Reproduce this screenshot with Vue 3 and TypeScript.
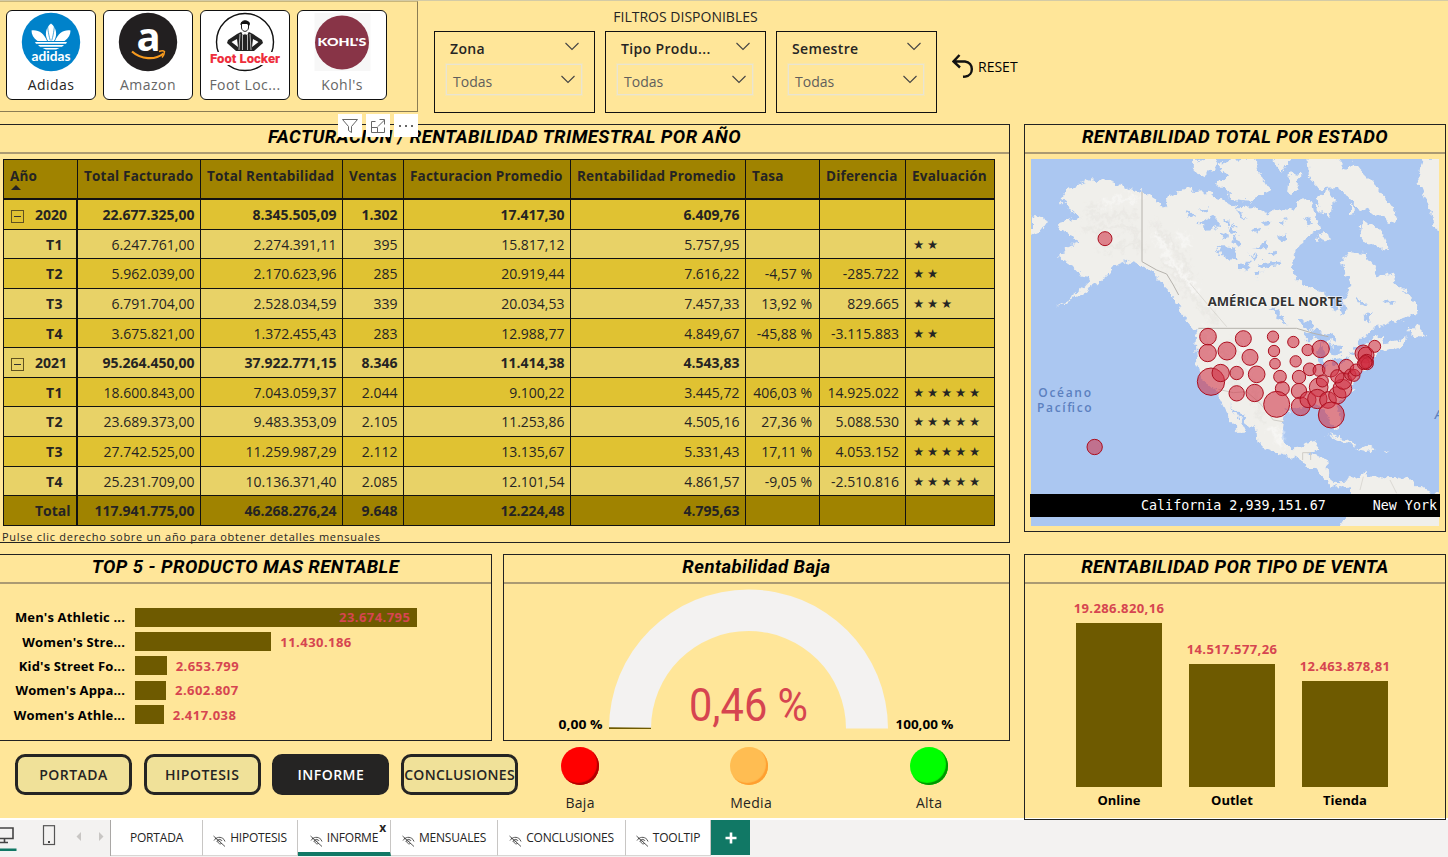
<script setup lang="ts">
interface Filter { label: string; value: string }
interface Row { label: string; group?: boolean; cells: string[]; stars: number }
interface Tab { label: string; hidden: boolean; active?: boolean; width: number }

const filters: Filter[] = [
  { label: 'Zona', value: 'Todas' },
  { label: 'Tipo Produ...', value: 'Todas' },
  { label: 'Semestre', value: 'Todas' },
]

const headers: string[] = ['Total Facturado', 'Total Rentabilidad', 'Ventas', 'Facturacion Promedio', 'Rentabilidad Promedio', 'Tasa', 'Diferencia', 'Evaluación']

const rows: Row[] = [
  { label: '2020', group: true, cells: ['22.677.325,00', '8.345.505,09', '1.302', '17.417,30', '6.409,76', '', ''], stars: 0 },
  { label: 'T1', cells: ['6.247.761,00', '2.274.391,11', '395', '15.817,12', '5.757,95', '', ''], stars: 2 },
  { label: 'T2', cells: ['5.962.039,00', '2.170.623,96', '285', '20.919,44', '7.616,22', '-4,57 %', '-285.722'], stars: 2 },
  { label: 'T3', cells: ['6.791.704,00', '2.528.034,59', '339', '20.034,53', '7.457,33', '13,92 %', '829.665'], stars: 3 },
  { label: 'T4', cells: ['3.675.821,00', '1.372.455,43', '283', '12.988,77', '4.849,67', '-45,88 %', '-3.115.883'], stars: 2 },
  { label: '2021', group: true, cells: ['95.264.450,00', '37.922.771,15', '8.346', '11.414,38', '4.543,83', '', ''], stars: 0 },
  { label: 'T1', cells: ['18.600.843,00', '7.043.059,37', '2.044', '9.100,22', '3.445,72', '406,03 %', '14.925.022'], stars: 5 },
  { label: 'T2', cells: ['23.689.373,00', '9.483.353,09', '2.105', '11.253,86', '4.505,16', '27,36 %', '5.088.530'], stars: 5 },
  { label: 'T3', cells: ['27.742.525,00', '11.259.987,29', '2.112', '13.135,67', '5.331,43', '17,11 %', '4.053.152'], stars: 5 },
  { label: 'T4', cells: ['25.231.709,00', '10.136.371,40', '2.085', '12.101,54', '4.861,57', '-9,05 %', '-2.510.816'], stars: 5 },
]
const totals: string[] = ['117.941.775,00', '46.268.276,24', '9.648', '12.224,48', '4.795,63', '', '', '']

const products = [
  { name: "Men's Athletic ...", value: 23674795, text: '23.674.795' },
  { name: "Women's Stre...", value: 11430186, text: '11.430.186' },
  { name: "Kid's Street Fo...", value: 2653799, text: '2.653.799' },
  { name: "Women's Appa...", value: 2602807, text: '2.602.807' },
  { name: "Women's Athle...", value: 2417038, text: '2.417.038' },
]
const productWidth = (v: number): string => `${(v / 23674795) * 282.4}px`

const channels = [
  { name: 'Online', value: 19286820.16, text: '19.286.820,16' },
  { name: 'Outlet', value: 14517577.26, text: '14.517.577,26' },
  { name: 'Tienda', value: 12463878.81, text: '12.463.878,81' },
]
const channelHeight = (v: number): string => `${(v / 19286820.16) * 163.6}px`

const navButtons: string[] = ['PORTADA', 'HIPOTESIS', 'INFORME', 'CONCLUSIONES']
const lights = [
  { label: 'Baja', cls: 'red' },
  { label: 'Media', cls: 'amber' },
  { label: 'Alta', cls: 'green' },
]

const tabs: Tab[] = [
  { label: 'PORTADA', hidden: false, width: 92 },
  { label: 'HIPOTESIS', hidden: true, width: 95 },
  { label: 'INFORME', hidden: true, active: true, width: 93 },
  { label: 'MENSUALES', hidden: true, width: 107 },
  { label: 'CONCLUSIONES', hidden: true, width: 128 },
  { label: 'TOOLTIP', hidden: true, width: 85 },
]

// One bubble per state: centre x, centre y, radius in map units
const bubbles: number[][] = [
  [255, 356, 21], [224, 981, 23], [564, 650, 25], [563, 699, 26], [621, 693, 27], [670, 656, 24], [690, 712, 24],
  [573, 785, 41], [602, 759, 26], [650, 759, 20], [710, 763, 25], [650, 820, 23], [704, 819, 26], [759, 650, 17],
  [762, 693, 17], [765, 731, 16], [780, 770, 19], [787, 806, 21], [770, 853, 39], [820, 666, 17], [827, 724, 17],
  [837, 771, 20], [837, 813, 23], [842, 859, 28], [863, 690, 17], [902, 687, 26], [869, 748, 19], [897, 751, 18],
  [932, 746, 25], [896, 802, 28], [907, 783, 18], [864, 839, 24], [892, 837, 29], [924, 840, 25], [952, 826, 26],
  [967, 806, 28], [970, 783, 25], [952, 769, 20], [979, 740, 22], [991, 764, 17], [1002, 766, 18], [1008, 750, 18],
  [1030, 700, 25], [1038, 705, 24], [1064, 679, 18], [1040, 723, 20], [1030, 731, 18], [1042, 731, 18], [1036, 727, 20], [934, 885, 39],
]
</script>

<template>
  <div class="app">
    <div class="report">
      <div class="top">
        <div class="brands">
          <div class="brand selected">
            <svg class="logo" viewBox="0 0 60 60">
              <circle cx="30" cy="30" r="29.2" fill="#0082ca" />
              <g fill="#fff">
                <path d="M30 11.5c5 4 7 10.500 3 17.500h-6c-4-7-2-13.500 3-17.500z" />
                <path d="M10.500 18.500c7-1 12.500 3 15.500 10.500h-9.500c-4-3-6-6.500-6-10.500z" />
                <path d="M49.500 18.500c-7-1-12.500 3-15.500 10.500h9.500c4-3 6-6.500 6-10.500z" />
                <path d="M14 30h32l-1 1.700H15zM17 33h26l-2 1.700H19zM21.500 36h17l-3.500 1.600H25z" />
              </g>
              <path d="M26.500 13.500c.8 7 1.500 11 2.800 15M33.500 13.500c-.8 7-1.500 11-2.800 15" stroke="#0082ca" stroke-width=".7" fill="none" />
              <text class="adi" x="30" y="48.500" textLength="39" lengthAdjust="spacingAndGlyphs">adidas</text>
            </svg>
            <span>Adidas</span>
          </div>
          <div class="brand">
            <svg class="logo" viewBox="0 0 60 60">
              <circle cx="30" cy="30" r="29.200" fill="#221f20" />
              <text class="ama" x="30.500" y="38.500">a</text>
              <path d="M14 39.500c9 8 23 9 31.500 2" stroke="#f79a1e" stroke-width="2.200" fill="none" />
              <path d="M41 39.500c3-1 4.500-.8 5.500 0 0 2-.8 4-2.500 6" stroke="#f79a1e" stroke-width="1.500" fill="none" />
            </svg>
            <span>Amazon</span>
          </div>
          <div class="brand">
            <svg class="logo wide" viewBox="0 0 72 60">
              <circle cx="36" cy="30" r="28.500" fill="#fff" stroke="#111" stroke-width="1.400" />
              <path d="M28 22l4-2 4 2 4-2 4 2 9 6 1 3-9 8H27l-9-8 1-3z" fill="#222" />
              <path d="M22.500 30l5.500-3 1 8zM49.500 30l-5.500-3-1 8z" fill="#fff" />
              <path d="M31 22l-1 16M33.500 23v15M38.500 23v15M41 22l1 16" stroke="#ddd" stroke-width=".8" />
              <path d="M32.500 20l3.500 1.500 3.500-1.500-1 3-2.500-.8-2.500.8z" fill="#fff" />
              <path d="M32.500 11c0-3 7-3 7 0v5c-1 4.500-6 4.500-7 0z" fill="#fff" stroke="#222" stroke-width="1" />
              <path d="M31.500 13c-1-5 9.500-6 9.500-1l-1 2-2-2h-4.500z" fill="#111" />
              <rect x="0" y="40" width="72" height="13" fill="#fff" />
              <text class="foot" x="36" y="50.500" textLength="70" lengthAdjust="spacingAndGlyphs">Foot Locker</text>
            </svg>
            <span>Foot Loc...</span>
          </div>
          <div class="brand">
            <svg class="logo" viewBox="0 0 60 60">
              <rect x="2.500" y="1" width="56" height="58" fill="#f7f7f7" />
              <circle cx="30" cy="30.500" r="27" fill="#883447" />
              <text class="kohl" x="30" y="34.300" textLength="49" lengthAdjust="spacingAndGlyphs">KOHL'S</text>
            </svg>
            <span>Kohl's</span>
          </div>
          <div class="tools">
            <i><svg viewBox="0 0 24 23"><path d="M4.500 5.500h15l-6 7v6l-3-2v-4z" /></svg></i>
            <i><svg viewBox="0 0 24 23"><path d="M9.500 7.500h-4v11h13v-5M5.500 13.500h6v5M12 12.500l6.500-6.500M13.500 5.500h5v5" /></svg></i>
            <i><svg viewBox="0 0 24 23"><path class="dots" d="M5 12h2M11 12h2M17 12h2" /></svg></i>
          </div>
        </div>

        <div class="filters">
          <h3>FILTROS DISPONIBLES</h3>
          <div class="filter-row">
            <div v-for="f in filters" :key="f.label" class="filter">
              <div class="filter-head">
                <b>{{ f.label }}</b>
                <svg width="14" height="9" viewBox="0 0 14 9"><path d="M.5 1l6.500 6.500L13.500 1" /></svg>
              </div>
              <div class="select">
                <span>{{ f.value }}</span>
                <svg width="14" height="9" viewBox="0 0 14 9"><path d="M.5 1l6.500 6.500L13.500 1" /></svg>
              </div>
            </div>
          </div>
        </div>

        <div class="reset">
          <svg width="22" height="24" viewBox="0 0 22 24"><path d="M7.500 1L1.500 7.500l6.500 6M2 7.500h11c9 1 9 14 .5 15l-2.500.2" /></svg>
          <span>RESET</span>
        </div>
      </div>

      <div class="body">
        <div class="left">
          <section class="panel facts">
            <h2>FACTURACION / RENTABILIDAD TRIMESTRAL POR AÑO</h2>
            <div class="table">
              <div class="tr head">
                <div class="td">Año<em class="sort"></em></div>
                <div v-for="h in headers" :key="h" class="td">{{ h }}</div>
              </div>
              <div v-for="(r, i) in rows" :key="i" class="tr" :class="{ odd: i % 2 === 1, group: r.group }">
                <div class="td label"><em v-if="r.group" class="toggle"></em>{{ r.label }}</div>
                <div v-for="(c, j) in r.cells" :key="j" class="td">{{ c }}</div>
                <div class="td stars">{{ '★'.repeat(r.stars) }}</div>
              </div>
              <div class="tr total">
                <div class="td label">Total</div>
                <div v-for="(c, j) in totals" :key="j" class="td">{{ c }}</div>
              </div>
            </div>
            <p class="hint">Pulse clic derecho sobre un año para obtener detalles mensuales</p>
          </section>

          <div class="middle">
            <section class="panel top5">
              <h2>TOP 5 - PRODUCTO MAS RENTABLE</h2>
              <div class="hbars">
                <div v-for="(p, i) in products" :key="p.name" class="hrow">
                  <span class="name">{{ p.name }}</span>
                  <div class="bar" :style="{ width: productWidth(p.value) }"><span v-if="i === 0">{{ p.text }}</span></div>
                  <span v-if="i > 0" class="val">{{ p.text }}</span>
                </div>
              </div>
            </section>
            <section class="panel gauge">
              <h2>Rentabilidad Baja</h2>
              <svg width="505" height="156" viewBox="504 584 505 156">
                <path d="M609 728.500a139.500 139 0 0 1 279 0h-42a97.500 97.500 0 0 0-195 0z" fill="#f3f2f1" />
                <path d="M609 727.200l42 .5v1.300h-42z" fill="#6e5a00" />
                <text class="big" x="689" y="720.500" textLength="119" lengthAdjust="spacingAndGlyphs">0,46 %</text>
                <text class="lim" x="558.500" y="728.500" textLength="44" lengthAdjust="spacingAndGlyphs">0,00 %</text>
                <text class="lim" x="895.500" y="728.500" textLength="58" lengthAdjust="spacingAndGlyphs">100,00 %</text>
              </svg>
            </section>
          </div>

          <div class="footer">
            <nav class="nav">
              <button v-for="b in navButtons" :key="b" type="button" :class="{ on: b === 'INFORME' }">{{ b }}</button>
            </nav>
            <div class="lights">
              <div v-for="l in lights" :key="l.label" class="light">
                <i :class="l.cls"></i>
                <span>{{ l.label }}</span>
              </div>
            </div>
          </div>
        </div>

        <div class="right">
          <section class="panel map-panel">
            <h2>RENTABILIDAD TOTAL POR ESTADO</h2>
            <div class="map">
              <svg width="408" height="367" viewBox="33 117 1224 1101">
                <defs>
                  <filter id="coast" x="-5%" y="-5%" width="110%" height="110%">
                    <feTurbulence type="fractalNoise" baseFrequency="0.04" numOctaves="4" seed="4" result="n" />
                    <feDisplacementMap in="SourceGraphic" in2="n" scale="34" xChannelSelector="R" yChannelSelector="G" />
                  </filter>
                  <filter id="relief" x="-5%" y="-5%" width="110%" height="110%">
                    <feGaussianBlur stdDeviation="6" result="b" />
                    <feTurbulence type="fractalNoise" baseFrequency="0.05" numOctaves="3" seed="9" result="n" />
                    <feDisplacementMap in="b" in2="n" scale="60" xChannelSelector="R" yChannelSelector="G" />
                  </filter>
                </defs>
                <rect x="33" y="117" width="1224" height="1101" fill="#abc7f1" />
                <g filter="url(#coast)" fill="#f0efeb">
                  <path d="M120 245L155 200 215 178 280 185 330 205 366 212 410 240 430 265 450 225 495 205 530 220 565 215 620 250 660 262 700 258 740 280 790 262 820 272 850 235 882 250 890 290 903 325 870 345 850 368 830 382 815 420 820 465 850 495 905 512 930 532 950 565 962 590 978 578 970 540 990 508 982 470 965 425 985 395 1030 402 1060 435 1075 470 1110 455 1140 500 1190 555 1192 582 1130 602 1065 625 1030 650 1000 690 1030 680 1060 655 1085 650 1090 670 1120 665 1160 655 1150 675 1110 690 1075 695 1050 715 1050 740 1020 760 1000 790 985 820 960 850 950 870 965 900 962 930 940 925 925 890 910 865 880 860 850 868 810 862 790 890 783 930 795 970 820 985 850 980 860 965 890 960 885 985 865 1005 925 1020 928 1070 950 1088 985 1082 1000 1070 1040 1058 1060 1070 1110 1068 1170 1080 1210 1110 1270 1125 1270 1235 950 1235 975 1195 990 1150 990 1110 965 1098 935 1100 900 1060 860 1035 820 1015 775 1002 730 985 712 960 710 930 680 905 650 870 630 850 645 880 665 905 682 940 668 942 640 915 615 870 596 830 580 808 545 780 530 740 525 680 530 640 500 600 480 565 465 530 435 500 405 462 365 438 320 425 285 440 255 472 225 495 175 530 105 560 160 528 200 495 215 465 175 460 150 432 120 412 140 382 175 368 165 350 110 325 115 305 150 300 175 290 150 270z" />
                  <path d="M520 120L590 115 580 150 540 170 518 145zM590 130L700 110 720 160 750 215 690 245 640 240 610 210 585 190 620 170zM760 110L810 110 790 165zM810 160L838 165 835 215 805 215zM865 110L950 110 975 150 1000 125 1030 160 1070 200 1100 240 1135 290 1120 310 1060 280 1010 260 960 200 900 205 870 175zM925 205L942 240 930 290 900 280 890 235zM990 250L1005 275 990 280zM1030 300L1080 330 1105 380 1070 385 1020 350zM905 335L935 355 920 372 895 355zM33 280L80 300 70 330 33 345zM1205 110L1270 110 1270 380 1250 330 1215 230 1195 180z" />
                  <path d="M1165 640L1190 610 1205 630 1222 645 1190 650zM920 945L975 955 1015 978 980 970zM1010 990L1045 972 1070 990 1040 997zM1085 990L1105 992 1095 998zM495 597L535 625 520 625z" />
                </g>
                <g filter="url(#relief)" fill="none" stroke-linecap="round" opacity=".75">
                  <path d="M200 260L330 240M190 330L330 320 370 390M240 390L350 370M400 310L470 390 520 470M430 420L500 510 590 610M580 660L620 720 650 810M640 660L700 780 720 900M200 290L340 285" stroke="#dedcd7" stroke-width="7" />
                  <path d="M250 250L350 232M480 340L510 375M410 350L460 430 530 520M560 630L590 700M665 670L690 750M760 930L790 975" stroke="#fff" stroke-width="10" />
                </g>
                <g filter="url(#coast)" fill="#abc7f1">
                  <path d="M495 270L530 285 510 295zM535 310L580 290 600 320 560 330zM590 380L640 385 650 410 610 415zM640 300L650 345 630 340zM660 440L680 425 700 425 660 460zM700 385L740 365 735 385zM720 430L780 425 775 435 730 450zM750 560L775 570 805 620 780 600zM735 300L750 310 740 325zM690 330L720 320 705 345zM650 260L680 300 660 290zM850 290L880 310 860 320zM770 350L800 340 790 365zM600 340L630 350 612 358zM1010 540L1040 545 1020 555zM1090 540L1130 545 1110 555zM1030 590L1060 575 1045 605zM840 600L875 605 890 630 850 620zM640 350L670 365 650 375zM700 460L725 455 710 475zM540 270L570 262 560 282zM610 310L625 300 628 325zM745 400L765 395 755 412zM780 305L800 300 790 320zM690 405L712 400 700 418z" />
                  <path d="M850 645L880 630 930 640 945 660 905 668 885 655 860 655zM895 680L905 670 915 740 895 745zM925 670L965 680 955 710 935 700zM935 730L980 710 975 722 940 742zM980 705L1005 695 1000 705z" />
                </g>
                <g fill="none" stroke="#b5b2ac" stroke-width="3">
                  <path d="M366 215V425L410 450 440 462 460 495 476 525M535 625H830L880 640 925 650" />
                  <path d="M595 808L640 818 680 815 720 850 760 900 790 905M848 1020V998H872V1020" stroke="#cfccc6" />
                  <path d="M1030 1070L1020 1110M1110 1080L1130 1120M510 490L560 550 620 620" stroke="#d0cdc7" stroke-width="2" />
                </g>
                <circle v-for="(b, i) in bubbles" :key="i" :cx="b[0]" :cy="b[1]" :r="b[2]" class="bubble" />
                <text class="continent" x="563" y="558" textLength="405" lengthAdjust="spacingAndGlyphs">AMÉRICA DEL NORTE</text>
                <text class="ocean" x="55" y="832" textLength="158">Océano</text>
                <text class="ocean" x="51" y="876" textLength="164">Pacífico</text>
                <text class="ocean it" x="1244" y="896">A</text>
              </svg>
              <div class="ticker"><span>California 2,939,151.67</span><span>New York</span></div>
            </div>
          </section>

          <section class="panel sales">
            <h2>RENTABILIDAD POR TIPO DE VENTA</h2>
            <div class="vbars">
              <div v-for="c in channels" :key="c.name" class="vcol">
                <span class="val">{{ c.text }}</span>
                <div class="vbar" :style="{ height: channelHeight(c.value) }"></div>
                <b>{{ c.name }}</b>
              </div>
            </div>
          </section>
        </div>
      </div>
    </div>

    <div class="tabbar">
      <div class="views">
        <svg width="110" height="36" viewBox="0 0 110 36">
          <path d="M0 8h13v10.500H0M4.500 19v3M0 22.500h8" fill="none" stroke="#444" stroke-width="1.600" />
          <rect x="0" y="28.500" width="16.500" height="2.500" fill="#117865" />
          <rect x="43.500" y="5.700" width="11" height="18.800" fill="none" stroke="#555" stroke-width="1.200" />
          <rect x="48" y="21" width="2" height="2" fill="#444" />
          <path d="M81 12v9l-4.500-4.500zM99 12v9l4.500-4.500z" fill="#c8c6c4" />
        </svg>
      </div>
      <div v-for="t in tabs" :key="t.label" class="tab" :class="{ active: t.active }" :style="{ width: t.width + 'px' }">
        <svg v-if="t.hidden" class="eye" width="13" height="12" viewBox="0 0 13 12">
          <path d="M.5 1l11.500 10.500M1 5.500C3 2 8 1 11 4.500l1 2M2 3l1.500 1M4 7c0-3 4-3.500 5-1M5 6.500c0 2.500 3 3 4 1.500M6.500 6h1" />
        </svg>
        <span>{{ t.label }}</span>
        <em v-if="t.active">x</em>
      </div>
      <div class="add"><svg width="12" height="12" viewBox="0 0 12 12"><path d="M6 .5v11M.5 6h11" stroke="#fff" stroke-width="2.600" /></svg></div>
    </div>
  </div>
</template>

<style>
body { background: #f3f2f1; overflow: hidden; }
</style>

<style scoped>
* { box-sizing: border-box; }
.app { width: 1448px; height: 857px; overflow: hidden; font-family: "Open Sans", "Noto Sans", sans-serif; color: #252423; font-size: 14px; background: #f3f2f1; }
.report { height: 818px; background: #ffe699; position: relative; z-index: 1; }
h2, h3, p { margin: 0; font-weight: 400; }
i, em { font-style: normal; }
.top { height: 124px; display: flex; align-items: flex-start; border-top: 1px solid #d4cba6; }

.brands { position: relative; width: 418px; height: 111px; border: 1px solid #8b7d54; border-left: 0; border-top-color: #c9b67b; display: flex; gap: 7px; padding: 8px 0 0 6px; }
.brand { width: 90px; height: 90px; background: #fff; border: 1px solid #111; border-radius: 6px; display: flex; flex-direction: column; align-items: center; color: #666; padding-top: 1px; }
.brand.selected { color: #252423; }
.brand span { line-height: 20px; margin-top: 3px; letter-spacing: .45px; }
.logo { width: 60px; height: 60px; flex: none; overflow: visible; }
.logo.wide { width: 72px; }
.logo text { text-anchor: middle; fill: #fff; font-weight: 700; }
.adi { font: 700 13px Lato, sans-serif; }
.ama { font: 700 40px "Open Sans", sans-serif; }
.logo .foot { font: 900 12px Roboto, sans-serif; fill: #ee2e3c; }
.logo .kohl { font: 900 10.500px Lato, sans-serif; }
.tools { position: absolute; left: 338px; top: 112px; display: flex; gap: 4px; z-index: 3; }
.tools i { width: 24px; height: 23px; background: #fff; }
.tools svg { display: block; width: 24px; height: 23px; fill: none; stroke: #666; stroke-width: 1; }
.tools .dots { stroke-width: 2; }

.filters { margin-left: 16px; width: 503px; padding-top: 5px; }
.filters h3 { text-align: center; line-height: 21px; font-size: 14px; }
.filter-row { display: flex; justify-content: space-between; margin-top: 4px; }
.filter { width: 161px; height: 82px; border: 1px solid #111; padding: 0 12px 0 11px; }
.filter-head { height: 32px; display: flex; align-items: center; justify-content: space-between; padding: 0 3px 0 4px; }
.filter-head b { font-weight: 600; letter-spacing: .35px; }
.filter-head svg { margin-top: -3px; }
.filter svg { fill: none; stroke: #444; stroke-width: 1.1; }
.select { height: 31px; border: 1px solid #e9e4d2; outline: 1px solid rgba(233, 228, 210, .35); display: flex; align-items: center; justify-content: space-between; padding: 3px 6px 0 6px; color: #605e5c; }
.select svg { margin-top: -3px; }
.reset { display: flex; align-items: center; gap: 4px; margin: 52px 0 0 15px; color: #000; height: 26px; }
.reset svg { fill: none; stroke: #111; stroke-width: 2.4; }

.body { display: flex; gap: 14px; }
.left { width: 1010px; }
.right { width: 422px; }
.panel { border: 1px solid #222; }
.left .facts, .top5 { border-left: 0; }
h2 { height: 29px; text-align: center; font: italic 700 18.500px/25px Roboto, sans-serif; letter-spacing: .43px; color: #000; border-bottom: 2px solid #ab9a72; white-space: nowrap; }
.facts { height: 419px; }
.table { margin: 5px 0 0 3px; width: 992px; border: 1px solid #111; }
.tr { display: grid; grid-template-columns: 74px 123px 142px 61px 167px 175px 74px 86px 88px; height: 29.65px; background: #e0c232; border-bottom: 1px solid #111; }
.tr.odd { background: #e8d267; }
.tr.head { height: 40px; background: #a08300; border-bottom-width: 2px; font-weight: 700; }
.tr.total { height: 29px; background: #a08300; border-bottom: 0; font-weight: 700; }
.tr.group { font-weight: 700; }
.td { border-right: 1px solid #111; padding: 2px 5.500px 0 0; text-align: right; line-height: 26px; white-space: nowrap; }
.td:last-child { border-right: 0; }
.tr .td:first-child { border-right-width: 2px; }
.head .td { padding: 3px 0 0 6px; text-align: left; position: relative; font-size: 13.500px; letter-spacing: .2px; }
.head .td:first-child { border-right-width: 1px; }
.td:nth-child(7) { padding-right: 7px; }
.td:nth-child(8) { padding-right: 6px; }
.td.label { position: relative; text-align: left; padding-left: 42px; font-weight: 700; letter-spacing: .4px; }
.group .td.label, .total .td.label { padding-left: 31px; letter-spacing: 0; }
.sort { position: absolute; left: 7px; top: 25px; border: 5px solid transparent; border-top: 0; border-bottom-color: #252423; }
.toggle { position: absolute; left: 7px; top: 10px; width: 13px; height: 13px; border: 1px solid #605220; }
.toggle::after { content: ""; position: absolute; left: 2px; top: 5px; width: 7px; height: 1px; background: #333; }
.td.stars { text-align: left; padding-left: 7px; font: 12.500px/25px "DejaVu Sans", sans-serif; letter-spacing: 2.800px; }
.hint { font-size: 11px; line-height: 15px; padding-left: 2px; margin-top: 3px; letter-spacing: .72px; white-space: nowrap; }

.middle { display: flex; gap: 11px; margin-top: 11px; }
.top5 { width: 492px; height: 187px; }
.gauge { width: 507px; height: 187px; }
.gauge svg { display: block; }
.big { font: 400 47px Roboto, sans-serif; fill: #d64550; }
.lim { font: 700 13px "Open Sans", sans-serif; fill: #000; }
.hbars { padding-top: 21px; }
.hrow { display: flex; align-items: center; height: 24.400px; font-size: 13px; font-weight: 700; }
.name { width: 125px; text-align: right; margin-right: 10px; color: #000; white-space: nowrap; letter-spacing: .15px; }
.bar { height: 19px; background: #6e5a00; text-align: right; padding-right: 7px; line-height: 19px; color: #d64550; }
.bar, .val { letter-spacing: .45px; }
.hrow .val { margin-left: 9px; }
.val { color: #d64550; font-weight: 700; font-size: 13px; }

.footer { display: flex; }
.nav { display: flex; gap: 11.700px; padding: 13px 0 0 15px; }
button { width: 117px; height: 41px; border: 3px solid #252423; border-radius: 10px; background: #f0e199; font: 600 14px "Open Sans", sans-serif; letter-spacing: .3px; color: #252423; padding: 0; white-space: nowrap; display: flex; align-items: center; justify-content: center; }
button:not(:last-child) { letter-spacing: .5px; }
button.on { background: #252423; color: #fff; }
.lights { display: flex; margin-left: 36px; padding-top: 6px; }
.light { width: 52px; display: flex; flex-direction: column; align-items: center; }
.light:nth-child(2) { margin: 0 126px 0 119px; }
.light i { width: 38px; height: 38px; border-radius: 50%; }
.light:nth-child(2) i { margin-right: 4px; }
.light span { margin-top: 8px; line-height: 20px; letter-spacing: .3px; }
.red { background: #f00; box-shadow: inset -2px -2px 1px #b00000; }
.amber { background: #ffbd52; box-shadow: inset -2px -2px 1px #ff9f30; }
.green { background: #0f0; box-shadow: inset -2px -2px 1px #009400; }

.map-panel { height: 408px; }
.map { margin: 5px 0 0 6px; width: 409px; position: relative; }
.map svg { display: block; }
.bubble { fill: rgba(208, 48, 66, .57); stroke: #ac1020; stroke-width: 3; }
.continent { font: 700 36px "Open Sans", sans-serif; fill: #333; stroke: #fff; stroke-width: 3; paint-order: stroke; }
.ocean { font: 600 36px "Open Sans", sans-serif; fill: #5b80bf; }
.ocean.it { font-style: italic; }
.ticker { position: absolute; left: -1px; right: 0; top: 335px; height: 23px; overflow: hidden; background: #000; color: #fff; font: 13.350px/23px "DejaVu Sans Mono", monospace; display: flex; justify-content: space-between; padding: 0 3px 0 111px; white-space: pre; }
.sales { margin-top: 22px; height: 266px; }
.vbars { display: flex; gap: 17px; padding: 0 0 0 46px; height: 226px; align-items: flex-end; }
.vcol { width: 96px; height: 100%; display: flex; flex-direction: column; align-items: center; justify-content: flex-end; }
.vcol .val { line-height: 20px; margin-bottom: 5px; letter-spacing: .4px; }
.vbar { width: 86px; background: #6e5a00; flex: none; }
.vcol b { line-height: 20px; margin-top: 3px; font-size: 13px; color: #000; }

.tabbar { display: flex; height: 39px; border-top: 2px solid #fff; }
.views { width: 111px; height: 36px; border-right: 1px solid #a9a7a5; }
.views svg { display: block; }
.tab { position: relative; height: 36px; background: #fff; border-right: 1px solid #c8c6c4; border-bottom: 1px solid #d8d6d4; display: flex; align-items: center; justify-content: center; gap: 4px; font-size: 12px; color: #252423; letter-spacing: -.2px; }
.tab.active { border-bottom: 4px solid #117865; padding-top: 3px; }
.tab em { position: absolute; right: 4px; top: 1px; font: 700 12px/14px "Open Sans", sans-serif; }
.eye { margin-top: 6px; fill: none; stroke: #444; stroke-width: .9; flex: none; }
.add { width: 39px; height: 35px; background: #117865; display: flex; align-items: center; justify-content: center; }
</style>
